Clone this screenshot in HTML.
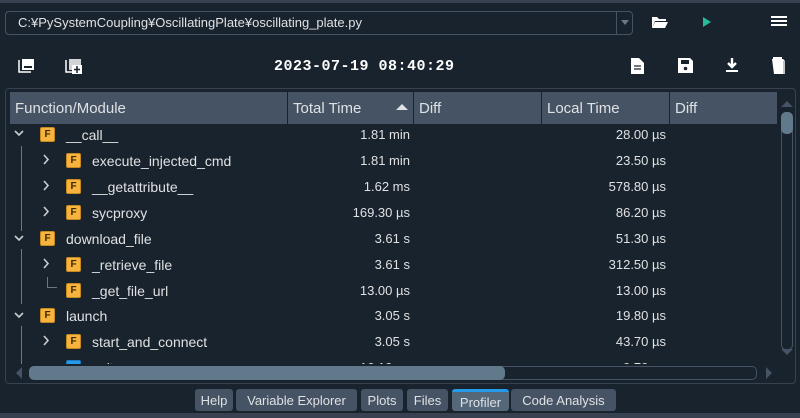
<!DOCTYPE html><html><head><style>
body{margin:0;width:800px;height:418px;background:#19232d;position:relative;overflow:hidden;font-family:"Liberation Sans",sans-serif;color:#dfe1e2}
.a{position:absolute}
.hd{position:absolute;top:92px;height:32px;background:#455364;font-size:15px;line-height:33px;padding-left:5px;box-sizing:border-box;color:#e0e1e3}
.f{position:absolute;width:13px;height:13px;background:#f7b33e;border:1px solid #c78a20;border-radius:2px;font-size:10px;line-height:13px;text-align:center;color:#3a2a00;font-weight:bold}
.n{position:absolute;font-size:14px}
.t{position:absolute;text-align:right;font-size:13px}
.tab{position:absolute;top:389px;height:22px;background:#455364;border-radius:3px;font-size:13px;line-height:24px;text-align:center;color:#dfe1e2}
</style></head><body>
<div class="a" style="left:0;top:0;width:800px;height:3px;background:#37414f"></div>
<div class="a" style="left:5px;top:11px;width:628px;height:24px;border:1px solid #455364;border-radius:4px;box-sizing:border-box;font-size:13px;line-height:22px;padding-left:12px;color:#e0e1e3">C:¥PySystemCoupling¥OscillatingPlate¥oscillating_plate.py</div>
<div class="a" style="left:616px;top:12px;width:1px;height:22px;background:#455364"></div>
<div class="a" style="left:621px;top:20px;border:4px solid transparent;border-top:5px solid #6b7785"></div>
<svg class="a" style="left:651px;top:15px" width="17" height="14"><path d="M1 2h5l2 2h7v2H4L1 13z" fill="#fff"/><path d="M4 7h13l-3 6H1z" fill="#fff"/></svg>
<svg class="a" style="left:702px;top:16px" width="10" height="12"><path d="M1 1l8 5-8 5z" fill="#26b99a"/></svg>
<svg class="a" style="left:771px;top:16px" width="16" height="12"><path d="M0 1h16M0 5h16M0 9h16" stroke="#fff" stroke-width="2"/></svg>
<svg class="a" style="left:18px;top:57px" width="18" height="17"><path d="M1 3v12h12" stroke="#fff" stroke-width="1.5" fill="none"/><rect x="4" y="2" width="12" height="11" fill="#fff"/><rect x="6" y="9" width="8" height="2" fill="#19232d"/></svg>
<svg class="a" style="left:65px;top:57px" width="18" height="19"><path d="M1 3v12h12" stroke="#fff" stroke-width="1.5" fill="none"/><rect x="4" y="2" width="12" height="11" fill="#fff" opacity=".8"/><rect x="7" y="8" width="10" height="9" fill="#fff"/><path d="M12 9v7M9 12.5h6" stroke="#19232d" stroke-width="1.5"/></svg>
<div class="a" style="left:274px;top:57px;font-family:'Liberation Mono',monospace;font-weight:bold;font-size:15px;letter-spacing:.5px;line-height:20px;color:#fff">2023-07-19 08:40:29</div>
<svg class="a" style="left:631px;top:58px" width="13" height="16"><path d="M0 0h8l5 5v11H0z" fill="#fff"/><path d="M3 8h7M3 11h7" stroke="#19232d" stroke-width="1.3"/></svg>
<svg class="a" style="left:678px;top:58px" width="15" height="15"><path d="M0 0h12l3 3v12H0z" fill="#fff"/><rect x="3" y="2" width="8" height="4" fill="#19232d"/><circle cx="7.5" cy="10.5" r="1.8" fill="#19232d"/></svg>
<svg class="a" style="left:725px;top:58px" width="14" height="15"><path d="M7 0v8M3 5l4 4 4-4" stroke="#fff" stroke-width="2.4" fill="none"/><rect x="1" y="12" width="12" height="2" fill="#fff"/></svg>
<svg class="a" style="left:771px;top:56px" width="16" height="19"><rect x="2" y="1" width="9" height="2" fill="#fff"/><path d="M1 3h11l2 2v13H3z" fill="#fff"/><path d="M13 5v13" stroke="#888" stroke-width="1"/></svg>
<div class="a" style="left:5px;top:88px;width:791px;height:296px;border:1px solid #37414f;border-radius:4px;box-sizing:border-box"></div>
<div class="hd" style="left:10px;width:277px">Function/Module</div>
<div class="hd" style="left:288px;width:125px">Total Time</div>
<svg class="a" style="left:396px;top:103px" width="12" height="8"><path d="M0 7L6 1l6 6z" fill="#e0e1e3"/></svg>
<div class="hd" style="left:414px;width:127px">Diff</div>
<div class="hd" style="left:542px;width:127px">Local Time</div>
<div class="hd" style="left:670px;width:107px">Diff</div>
<svg class="a" style="left:780px;top:99px" width="14" height="10"><path d="M1 8L7 2l6 6z" fill="#455364"/></svg>
<div class="a" style="left:781px;top:112px;width:12px;height:238px;border:1px solid #455364;border-radius:5px;box-sizing:border-box"></div>
<div class="a" style="left:781px;top:112px;width:12px;height:22px;background:#60798b;border-radius:5px"></div>
<svg class="a" style="left:780px;top:347px" width="14" height="10"><path d="M1 2h12L7 8z" fill="#455364"/></svg>
<svg class="a" style="left:14px;top:366px" width="10" height="14"><path d="M8 1v12L2 7z" fill="#455364"/></svg>
<div class="a" style="left:29px;top:366px;width:728px;height:14px;border:1px solid #455364;border-radius:5px;box-sizing:border-box"></div>
<div class="a" style="left:29px;top:366px;width:476px;height:14px;background:#60798b;border-radius:5px"></div>
<svg class="a" style="left:764px;top:366px" width="10" height="14"><path d="M2 1v12l6-6z" fill="#455364"/></svg>
<div class="tab" style="left:195px;width:38px">Help</div>
<div class="tab" style="left:236px;width:121px">Variable Explorer</div>
<div class="tab" style="left:361px;width:42px">Plots</div>
<div class="tab" style="left:407px;width:41px">Files</div>
<div class="tab" style="left:452px;width:57px;border-top:3px solid #259ae9;height:19px;line-height:22px;background:#54687a">Profiler</div>
<div class="tab" style="left:511px;width:105px">Code Analysis</div>
<div class="a" style="left:0;top:413px;width:800px;height:5px;background:#37414f"></div>
<div style="position:absolute;left:10px;top:124px;width:768px;height:240px;overflow:hidden;font-size:14px">
<div class="a" style="left:11px;top:22px;width:1px;height:85px;background:#6b7785"></div>
<div class="a" style="left:11px;top:125px;width:1px;height:55px;background:#6b7785"></div>
<div class="a" style="left:11px;top:202px;width:1px;height:45px;background:#6b7785"></div>
<div class="a" style="left:37px;top:153px;width:1px;height:10px;background:#6b7785"></div>
<div class="a" style="left:37px;top:163px;width:10px;height:1px;background:#6b7785"></div>

<svg class="a" style="left:4px;top:6px" width="10" height="8"><path d="M1 1l4 4 4-4" stroke="#c9cdd0" stroke-width="1.6" fill="none"/></svg>
<div class="f" style="left:30px;top:3px">F</div><div class="n" style="left:56px;top:3px">__call__</div>
<div class="t" style="left:290px;width:110px;top:3px">1.81 min</div><div class="t" style="left:545px;width:111px;top:3px">28.00 µs</div>

<svg class="a" style="left:32px;top:30px" width="8" height="11"><path d="M2 1l4 4.5-4 4.5" stroke="#c9cdd0" stroke-width="1.6" fill="none"/></svg>
<div class="f" style="left:56px;top:29px">F</div><div class="n" style="left:82px;top:29px">execute_injected_cmd</div>
<div class="t" style="left:290px;width:110px;top:29px">1.81 min</div><div class="t" style="left:545px;width:111px;top:29px">23.50 µs</div>

<svg class="a" style="left:32px;top:56px" width="8" height="11"><path d="M2 1l4 4.5-4 4.5" stroke="#c9cdd0" stroke-width="1.6" fill="none"/></svg>
<div class="f" style="left:56px;top:55px">F</div><div class="n" style="left:82px;top:55px">__getattribute__</div>
<div class="t" style="left:290px;width:110px;top:55px">1.62 ms</div><div class="t" style="left:545px;width:111px;top:55px">578.80 µs</div>

<svg class="a" style="left:32px;top:82px" width="8" height="11"><path d="M2 1l4 4.5-4 4.5" stroke="#c9cdd0" stroke-width="1.6" fill="none"/></svg>
<div class="f" style="left:56px;top:81px">F</div><div class="n" style="left:82px;top:81px">sycproxy</div>
<div class="t" style="left:290px;width:110px;top:81px">169.30 µs</div><div class="t" style="left:545px;width:111px;top:81px">86.20 µs</div>

<svg class="a" style="left:4px;top:111px" width="10" height="8"><path d="M1 1l4 4 4-4" stroke="#c9cdd0" stroke-width="1.6" fill="none"/></svg>
<div class="f" style="left:30px;top:107px">F</div><div class="n" style="left:56px;top:107px">download_file</div>
<div class="t" style="left:290px;width:110px;top:107px">3.61 s</div><div class="t" style="left:545px;width:111px;top:107px">51.30 µs</div>

<svg class="a" style="left:32px;top:134px" width="8" height="11"><path d="M2 1l4 4.5-4 4.5" stroke="#c9cdd0" stroke-width="1.6" fill="none"/></svg>
<div class="f" style="left:56px;top:133px">F</div><div class="n" style="left:82px;top:133px">_retrieve_file</div>
<div class="t" style="left:290px;width:110px;top:133px">3.61 s</div><div class="t" style="left:545px;width:111px;top:133px">312.50 µs</div>

<div class="f" style="left:56px;top:159px">F</div><div class="n" style="left:82px;top:159px">_get_file_url</div>
<div class="t" style="left:290px;width:110px;top:159px">13.00 µs</div><div class="t" style="left:545px;width:111px;top:159px">13.00 µs</div>

<svg class="a" style="left:4px;top:188px" width="10" height="8"><path d="M1 1l4 4 4-4" stroke="#c9cdd0" stroke-width="1.6" fill="none"/></svg>
<div class="f" style="left:30px;top:184px">F</div><div class="n" style="left:56px;top:184px">launch</div>
<div class="t" style="left:290px;width:110px;top:184px">3.05 s</div><div class="t" style="left:545px;width:111px;top:184px">19.80 µs</div>

<svg class="a" style="left:32px;top:211px" width="8" height="11"><path d="M2 1l4 4.5-4 4.5" stroke="#c9cdd0" stroke-width="1.6" fill="none"/></svg>
<div class="f" style="left:56px;top:210px">F</div><div class="n" style="left:82px;top:210px">start_and_connect</div>
<div class="t" style="left:290px;width:110px;top:210px">3.05 s</div><div class="t" style="left:545px;width:111px;top:210px">43.70 µs</div>

<div class="f" style="left:56px;top:236px;background:#259ae9;border-color:#1a7bc0"></div><div class="n" style="left:82px;top:236px">exit</div>
<div class="t" style="left:290px;width:110px;top:236px">16.10 µs</div><div class="t" style="left:545px;width:111px;top:236px">9.70 µs</div>
</div>
</body></html>
